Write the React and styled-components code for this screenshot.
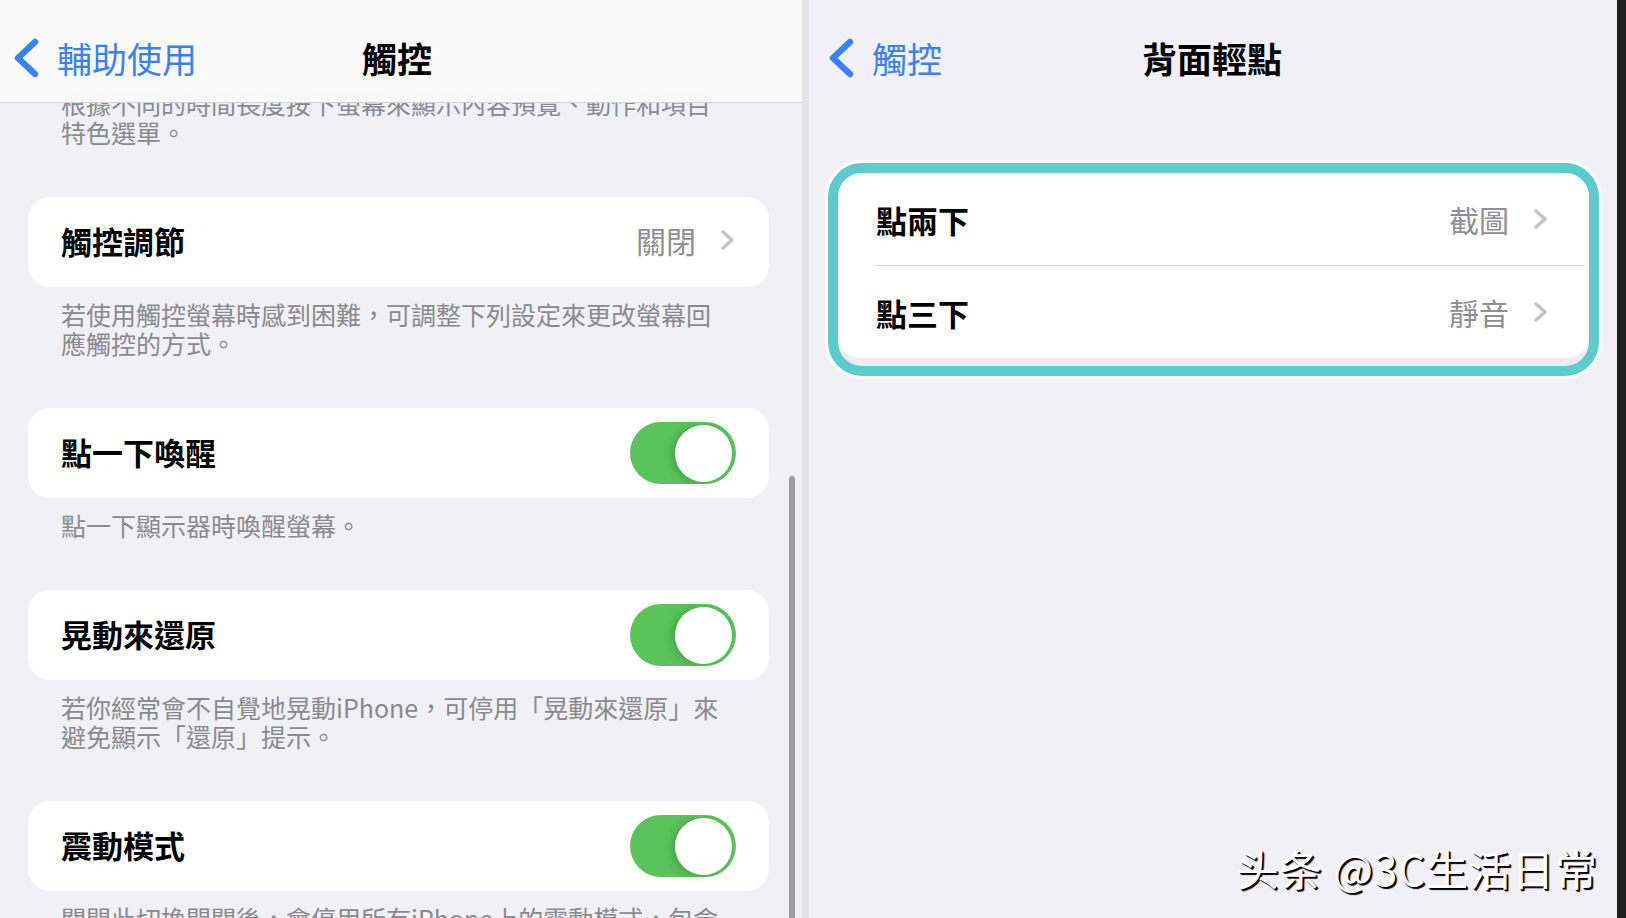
import React from 'react';
import styled, { createGlobalStyle } from 'styled-components';

const GlobalStyle = createGlobalStyle`
    html, body {
        margin: 0;
        padding: 0;
    }
    body {
        font-family: "Noto Sans CJK TC", "Noto Sans", "Liberation Sans", sans-serif;
        background: #f0f0f5;
        -webkit-font-smoothing: antialiased;
    }
`;

const Page = styled.div`
    position: relative;
    display: grid;
    grid-template-columns: 802px 7px 1fr 9px;
    width: 1626px;
    height: 918px;
    overflow: hidden;
    background: #f0f0f5;
`;

const LeftPanel = styled.section`
    position: relative;
    overflow: hidden;
    background: #f0f0f5;
`;

const RightPanel = styled.section`
    display: flex;
    flex-direction: column;
    background: #f0f0f6;
`;

const Divider = styled.div`
    background: #e3e3e6;
`;

const BlackEdge = styled.div`
    background: #1f1f20;
`;

const NavBar = styled.header`
    display: grid;
    grid-template-columns: 1fr auto 1fr;
    align-items: center;
    box-sizing: border-box;
    height: 103px;
    padding: 14px 21px 0 ${(p) => p.$inset}px;
    background: ${(p) => (p.$solid ? 'rgba(249, 249, 249, 0.98)' : 'transparent')};
    border-bottom: 1px solid ${(p) => (p.$solid ? '#d4d4d7' : 'transparent')};
`;

const FloatingNav = styled(NavBar)`
    position: absolute;
    top: 0;
    left: 0;
    right: 0;
    z-index: 2;
`;

const BackButton = styled.div`
    display: flex;
    align-items: center;
    gap: 18px;
    color: #3a80f6;
    font-size: 35px;
    line-height: 40px;
`;

const NavTitle = styled.h1`
    margin: 0;
    font-size: 35px;
    line-height: 40px;
    font-weight: 700;
    color: #000;
`;

const ScrollContent = styled.div`
    display: flex;
    flex-direction: column;
    padding: 89px 33px 0 28px;
`;

const Footer = styled.p`
    margin: ${(p) => (p.$first ? '0' : '13px')} 0 50px;
    padding: 0 33px;
    font-size: 25px;
    line-height: 29px;
    color: #8a8a8e;
    white-space: nowrap;
`;

const Card = styled.div`
    display: flex;
    align-items: center;
    justify-content: space-between;
    box-sizing: border-box;
    height: 90px;
    padding: 0 33px 4px;
    background: #fff;
    border-radius: 22px;
`;

const Label = styled.span`
    font-size: 31px;
    font-weight: 600;
    color: #000;
`;

const ValueGroup = styled.div`
    display: flex;
    align-items: center;
    gap: 24px;
`;

const Value = styled.span`
    font-size: 30px;
    color: #8e8e93;
`;

const Toggle = styled.div`
    position: relative;
    width: 106px;
    height: 62px;
    margin-top: 4px;
    border-radius: 31px;
    background: #5bc35b;
`;

const Knob = styled.div`
    position: absolute;
    top: 3px;
    right: 4px;
    width: 57px;
    height: 57px;
    border-radius: 50%;
    background: #fff;
    box-shadow: -4px 1px 8px rgba(0, 60, 0, 0.22);
`;

const ScrollBar = styled.div`
    position: absolute;
    left: 789px;
    top: 476px;
    bottom: 0;
    width: 6px;
    border-radius: 3px 3px 0 0;
    background: #9c9c9f;
`;

const Highlight = styled.div`
    margin: 60px 18px 0 19px;
    border: 10px solid #5ccbcb;
    border-radius: 34px;
    box-shadow: 0 0 0 3px #fff;
    background: #ececf1;
    overflow: hidden;
`;

const GroupCard = styled.div`
    display: flex;
    flex-direction: column;
    margin-bottom: 8px;
    background: #fff;
    border-radius: 0 0 22px 22px;
`;

const GroupRow = styled.div`
    display: flex;
    align-items: center;
    justify-content: space-between;
    height: 92px;
    margin: 0 ${(p) => (p.$divided ? '4px 0 36px' : '0')};
    padding: 0 ${(p) => (p.$divided ? '36px 0 2px' : '40px 0 38px')};
    border-top: ${(p) => (p.$divided ? '1px solid #d8d8dc' : 'none')};
`;

const Watermark = styled.div`
    position: absolute;
    right: 28px;
    bottom: 26px;
    font-family: "Noto Sans CJK SC", "Noto Sans", sans-serif;
    font-size: 42px;
    line-height: 48px;
    color: #fff;
    text-shadow: 2px 2px 1px #000, 1px 1px 0 #000;
    letter-spacing: 1px;
`;

const BackChevron = () => (
    <svg width="26" height="40" viewBox="0 0 26 40">
        <path d="M22 4 L5 20 L22 36" fill="none" stroke="#3a80f6" strokeWidth="6.5" strokeLinecap="round" strokeLinejoin="round" />
    </svg>
);

const Disclosure = () => (
    <svg width="16" height="22" viewBox="0 0 16 22">
        <path d="M3 3 L12 11 L3 19" fill="none" stroke="#c4c4c8" strokeWidth="3.6" strokeLinecap="round" strokeLinejoin="round" />
    </svg>
);

const Switch = () => (
    <Toggle>
        <Knob />
    </Toggle>
);

const sections = [
    {
        label: '觸控調節',
        value: '關閉',
        footer: ['若使用觸控螢幕時感到困難，可調整下列設定來更改螢幕回', '應觸控的方式。'],
    },
    { label: '點一下喚醒', toggle: true, footer: ['點一下顯示器時喚醒螢幕。'] },
    {
        label: '晃動來還原',
        toggle: true,
        footer: ['若你經常會不自覺地晃動iPhone，可停用「晃動來還原」來', '避免顯示「還原」提示。'],
    },
    {
        label: '震動模式',
        toggle: true,
        footer: ['關閉此切換開關後，會停用所有iPhone上的震動模式，包含', '緊急地震、海嘯和其他緊急警報。'],
    },
];

const backTapRows = [
    { label: '點兩下', value: '截圖' },
    { label: '點三下', value: '靜音' },
];

export default function App() {
    return (
        <>
            <GlobalStyle />
            <Page>
                <LeftPanel>
                    <FloatingNav $solid $inset={13}>
                        <BackButton>
                            <BackChevron />
                            輔助使用
                        </BackButton>
                        <NavTitle>觸控</NavTitle>
                    </FloatingNav>

                    <ScrollContent>
                        <Footer $first>
                            根據不同的時間長度按下螢幕來顯示內容預覽、動作和項目
                            <br />
                            特色選單。
                        </Footer>
                        {sections.map((s) => (
                            <React.Fragment key={s.label}>
                                <Card>
                                    <Label>{s.label}</Label>
                                    {s.toggle ? (
                                        <Switch />
                                    ) : (
                                        <ValueGroup>
                                            <Value>{s.value}</Value>
                                            <Disclosure />
                                        </ValueGroup>
                                    )}
                                </Card>
                                <Footer>
                                    {s.footer.map((line, i) => (
                                        <React.Fragment key={i}>
                                            {i > 0 && <br />}
                                            {line}
                                        </React.Fragment>
                                    ))}
                                </Footer>
                            </React.Fragment>
                        ))}
                    </ScrollContent>

                    <ScrollBar />
                </LeftPanel>

                <Divider />

                <RightPanel>
                    <NavBar $inset={19}>
                        <BackButton>
                            <BackChevron />
                            觸控
                        </BackButton>
                        <NavTitle>背面輕點</NavTitle>
                    </NavBar>

                    <Highlight>
                        <GroupCard>
                            {backTapRows.map((r, i) => (
                                <GroupRow key={r.label} $divided={i > 0}>
                                    <Label>{r.label}</Label>
                                    <ValueGroup>
                                        <Value>{r.value}</Value>
                                        <Disclosure />
                                    </ValueGroup>
                                </GroupRow>
                            ))}
                        </GroupCard>
                    </Highlight>
                </RightPanel>

                <BlackEdge />

                <Watermark>头条 @3C生活日常</Watermark>
            </Page>
        </>
    );
}
